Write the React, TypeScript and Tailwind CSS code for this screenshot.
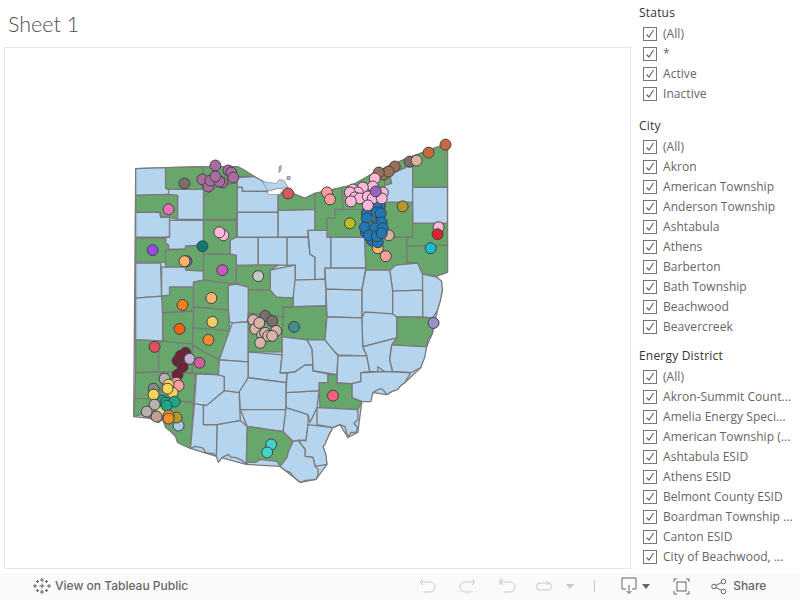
import React from "react";

const BLUE = "#b5d5ef";
const GREEN = "#68a76b";

// state outline, sits under the counties so no white shows between them
const outline =
  "135,168 203,166 237,166 254,176 263,181 278,193 290,192 305,198 315,193 342,187 352,185 373,173 390,165 407,158 428,150 448,143 448,272 437,276 443,290 438,310 433,333 427,347 421,368 405,383 387,395 373,393 362,402 358,433 348,438 340,425 333,428 323,447 327,465 316,480 300,483 280,467 246,465 216,457 190,449 162,420 133,417";

// county shapes in page coordinates, [fill, points]
const counties: [string, string][] = [
  [BLUE, "135,168 165,167 165,188 168,189 168,194 135,195"],
  [GREEN, "165,167 203,166 203,189 168,189 165,188"],
  [GREEN, "203,166 237,166 243,169 254,176 237,176 237,182 215,187 203,197"],
  [GREEN, "203,197 215,187 237,182 237,219 203,219"],
  [BLUE, "168,189 203,189 203,219 177,219 177,195 168,195"],
  [GREEN, "135,195 168,194 177,195 177,219 169,217 160,216 160,212 135,212"],
  [BLUE, "135,212 159,212 160,217 169,217 169,237 135,237"],
  [BLUE, "169,220 203,220 203,245 185,246 185,249 168,249 168,245 165,243 165,237 169,237"],
  [GREEN, "135,238 165,238 165,243 168,245 168,250 165,250 165,262 135,262"],
  [GREEN, "168,250 185,249 185,246 203,245 203,271 185,270 185,267 165,267 165,250"],
  [BLUE, "135,263 160,263 161,296 135,298"],
  [BLUE, "161,267 185,267 185,270 203,271 203,280 193,282 193,287 169,287 169,295 161,296"],
  [GREEN, "169,287 193,287 193,311 162,313 161,296 169,295"],
  [GREEN, "203,220 236,220 236,237 230,240 230,254 203,254"],
  [GREEN, "203,254 230,254 236,255 236,284 203,280"],
  [BLUE, "236,237 258,237 258,265 236,265 236,255 230,254 230,240"],
  [BLUE, "258,237 287,237 287,265 258,265"],
  [BLUE, "237,177 254,176 263,181 272,188 266,191 242,191 242,187 237,187"],
  [BLUE, "237,187 242,187 242,191 266,191 270,193 278,193 278,212 237,212"],
  [BLUE, "237,212 278,212 278,237 237,237"],
  [BLUE, "278,210 315,209 315,230 308,230 308,237 278,237"],
  [BLUE, "287,237 308,237 310,254 315,257 315,280 295,280 295,265 287,265"],
  [BLUE, "308,230 331,230 331,268 325,268 325,279 315,280 315,257 310,254"],
  [BLUE, "331,237 365,237 366,268 331,268"],
  [BLUE, "325,268 366,268 362,290 326,289"],
  [GREEN, "278,193 290,192 305,198 315,193 315,209 278,210"],
  [GREEN, "315,193 330,190 342,187 343,209 335,209 335,218 327,218 327,230 315,230"],
  [GREEN, "343,209 365,209 365,237 327,237 327,218 335,218 335,209"],
  [GREEN, "342,187 352,185 373,173 385,172 385,195 380,195 381,207 365,209 343,209"],
  [GREEN, "373,173 390,165 407,158 406,167 390,174 392,183 385,185 385,172"],
  [BLUE, "390,174 406,167 406,166 413,166 413,202 385,202 385,185 392,183"],
  [GREEN, "407,158 428,150 448,143 448,187 413,187 413,166 406,166"],
  [BLUE, "413,187 448,187 448,223 413,223"],
  [GREEN, "385,202 413,202 413,237 385,237"],
  [GREEN, "365,209 381,207 380,195 385,195 385,237 365,237"],
  [GREEN, "413,223 448,223 448,245 407,246 407,237 413,237"],
  [GREEN, "407,246 448,245 448,272 437,276 423,274 418,263 407,262"],
  [GREEN, "365,237 407,237 407,262 418,263 396,265 390,270 366,270"],
  [BLUE, "396,265 418,263 423,274 423,290 393,291 390,270"],
  [BLUE, "366,270 390,270 393,291 393,315 362,318 362,290"],
  [BLUE, "423,274 437,277 442,281 443,290 442,294 441,300 438,310 435,315 433,318 423,317"],
  [BLUE, "393,291 423,290 423,317 397,317 393,315"],
  [GREEN, "397,317 433,318 433,333 428,340 427,347 392,345 397,338"],
  [BLUE, "362,318 365,312 393,314 397,317 397,338 370,345 363,347"],
  [BLUE, "326,289 362,290 362,318 327,317"],
  [BLUE, "293,280 325,279 326,289 326,306 293,307"],
  [GREEN, "283,307 326,306 327,317 325,340 307,340 282,337"],
  [BLUE, "270,270 295,265 295,280 293,298 276,297 270,290"],
  [GREEN, "236,266 258,265 278,265 270,270 270,290 248,290 248,287 236,284"],
  [GREEN, "248,290 270,290 276,297 293,298 293,307 283,307 283,317 248,313"],
  [BLUE, "228,285 236,284 248,287 248,322 232,323 229,322 228,310"],
  [GREEN, "193,282 203,280 236,284 228,285 228,310 193,307"],
  [GREEN, "193,307 228,310 229,322 229,331 192,328"],
  [GREEN, "192,328 229,331 219,360 203,352 192,345"],
  [BLUE, "229,331 232,323 248,322 248,362 219,360"],
  [GREEN, "162,313 193,311 192,345 162,341"],
  [BLUE, "135,298 161,296 162,313 162,341 135,340"],
  [GREEN, "135,340 158,341 158,372 135,373"],
  [GREEN, "158,341 192,344 192,373 158,372"],
  [GREEN, "192,345 203,352 219,360 218,375 192,373"],
  [GREEN, "160,372 195,374 193,403 160,399"],
  [GREEN, "135,373 160,372 160,399 134,399"],
  [GREEN, "134,399 160,399 162,420 158,423 152,420 146,417 140,415 133,417"],
  [GREEN, "160,399 193,403 190,449 183,446 177,443 175,437 170,432 165,428 162,420"],
  [BLUE, "194,404 203,403 203,425 217,425 216,457 213,454 210,454 205,453 203,449 200,448 194,447 190,449"],
  [BLUE, "196,374 218,375 224,377 224,391 206,406 194,404"],
  [BLUE, "224,391 240,393 239,397 240,421 217,425 203,425 203,405 206,406"],
  [BLUE, "217,425 240,421 247,427 246,465 242,461 235,458 231,458 228,455 222,458 218,463 216,457"],
  [BLUE, "219,360 248,362 248,378 240,393 224,391 224,377 218,375"],
  [BLUE, "248,352 282,355 280,373 287,373 286,383 248,378"],
  [GREEN, "248,313 283,317 282,337 282,352 248,352"],
  [BLUE, "248,378 286,383 286,410 240,410 239,392"],
  [BLUE, "240,410 286,410 283,432 247,427"],
  [GREEN, "247,427 283,432 293,442 288,453 287,458 280,467 277,462 268,461 260,460 255,463 248,463 246,465"],
  [BLUE, "286,408 300,412 308,415 308,425 306,441 298,441 293,442 283,432"],
  [BLUE, "286,393 319,391 317,408 310,423 308,415 286,408"],
  [BLUE, "287,373 295,372 305,365 313,365 313,371 328,374 328,383 320,383 319,391 286,393"],
  [BLUE, "282,337 307,340 312,349 313,365 305,365 295,372 287,373 280,373 282,355"],
  [BLUE, "307,340 325,340 334,351 338,356 337,375 313,371 313,365 312,349"],
  [BLUE, "327,317 362,318 363,347 367,356 338,355 334,351 325,340"],
  [BLUE, "338,356 367,356 370,372 361,373 361,382 352,384 337,383"],
  [BLUE, "363,347 370,345 397,338 392,345 390,360 393,372 385,372 378,367 378,372 370,372 367,356"],
  [BLUE, "392,345 427,347 425,358 421,368 411,373 393,372 390,360"],
  [BLUE, "352,384 361,382 361,373 378,372 393,372 411,373 405,383 401,386 398,390 392,392 387,395 384,391 382,389 378,390 373,393 372,398 371,402 362,402 352,398"],
  [GREEN, "319,383 328,383 328,375 337,375 337,384 352,384 352,398 362,402 358,410 320,408"],
  [BLUE, "317,408 358,410 358,420 354,424 358,428 356,433 351,433 348,438 346,430 345,427 340,425 333,428 317,425"],
  [BLUE, "308,425 333,428 329,435 325,445 323,447 326,455 327,465 315,467 313,458 305,457 305,450 298,441 306,441"],
  [BLUE, "293,442 298,441 305,450 305,457 313,458 315,467 318,470 318,476 316,480 306,481 300,483 294,478 290,473 285,471 280,467 287,458 288,453"],
];

// points on the map, drawn in this order
const points: [number, number, string][] = [
  [184, 183, "#7b6f6c"], [168, 209, "#ee6fb8"], [288, 193, "#e15759"],
  [215, 165, "#a86d9c"], [202, 179, "#a86d9c"], [208, 186, "#a86d9c"], [222, 182, "#a86d9c"],
  [210, 180, "#a86d9c"], [219, 181, "#a86d9c"], [215, 176, "#a86d9c"], [228, 170, "#a86d9c"], [231, 172, "#a86d9c"], [233, 177, "#a86d9c"],
  [223, 235, "#ffb8d8"], [219, 232, "#ffb8d8"], [202, 246, "#0b7a75"], [152, 250, "#9a4be8"],
  [186, 261, "#7a5fb0"], [184, 261, "#ffb56b"], [222, 270, "#c75bc0"], [258, 276, "#c7c7c7"],
  [182, 305, "#f07f1e"], [211, 298, "#fdb56f"],
  [446, 144, "#c96a3e"], [429, 152, "#c96a3e"], [384, 174, "#9a7259"], [395, 166, "#9a7259"], [389, 171, "#9a7259"], [379, 172, "#9a7259"],
  [410, 161, "#7b6f6c"], [417, 160, "#d9b3a0"],
  [327, 192, "#ff9d9a"], [330, 199, "#ff9d9a"], [350, 223, "#bcbd22"], [403, 206, "#b59a2a"],
  [378, 248, "#ffb56b"], [386, 256, "#ff9d9a"], [389, 235, "#d9b3a0"],
  [366, 232, "#1f77b4"], [380, 205, "#1f77b4"], [376, 206, "#1f77b4"], [367, 213, "#1f77b4"], [377, 212, "#1f77b4"], [381, 213, "#1f77b4"], [367, 218, "#1f77b4"],
  [378, 223, "#1f77b4"], [382, 222, "#1f77b4"], [365, 227, "#1f77b4"], [375, 228, "#1f77b4"], [383, 228, "#1f77b4"], [372, 240, "#1f77b4"], [378, 242, "#1f77b4"], [369, 235, "#1f77b4"], [377, 236, "#1f77b4"], [382, 233, "#1f77b4"],
  [375, 178, "#ffb8d8"], [373, 186, "#ffb8d8"], [363, 187, "#ffb8d8"], [353, 189, "#ffb8d8"], [358, 192, "#ffb8d8"], [350, 192, "#ffb8d8"], [355, 197, "#ffb8d8"], [360, 198, "#ffb8d8"], [351, 201, "#ffb8d8"],
  [368, 196, "#ffb8d8"], [383, 192, "#ffb8d8"], [373, 198, "#ffb8d8"], [382, 198, "#ffb8d8"], [368, 205, "#ffb8d8"], [376, 191, "#9467bd"],
  [439, 227, "#ffb8d8"], [438, 234, "#d62728"], [431, 248, "#17becf"],
  [265, 316, "#7b6f6c"], [272, 321, "#7b6f6c"], [253, 320, "#d7b5a6"], [255, 329, "#d7b5a6"], [259, 323, "#d7b5a6"], [276, 331, "#d7b5a6"], [262, 335, "#d7b5a6"], [265, 333, "#d7b5a6"], [268, 336, "#d7b5a6"], [272, 336, "#d7b5a6"], [260, 343, "#d7b5a6"],
  [294, 327, "#3f8f8c"], [179, 329, "#f2640f"], [212, 322, "#f6cf62"], [208, 340, "#f28e2b"], [154, 347, "#e0505f"],
  [185, 353, "#6f2138"], [177, 361, "#6f2138"], [180, 356, "#6f2138"], [183, 362, "#6f2138"], [182, 367, "#6f2138"], [177, 375, "#6f2138"],
  [189, 359, "#c5b0d5"], [199, 363, "#d0609b"], [164, 379, "#bab0ac"], [176, 383, "#ff9d9a"], [178, 386, "#ff9d9a"],
  [168, 385, "#f6d55c"], [172, 393, "#f6d55c"], [167, 389, "#f6d55c"], [153, 389, "#888888"], [153, 395, "#f6d55c"],
  [160, 412, "#e6dc8a"], [162, 401, "#1aa784"], [165, 403, "#1aa784"], [174, 402, "#1aa784"], [154, 405, "#bab0ac"], [166, 406, "#1aa784"],
  [146, 412, "#bab0ac"], [156, 417, "#c49c94"], [178, 426, "#aec7e8"], [176, 418, "#b59a2a"], [168, 416, "#f28e2b"], [168, 419, "#f28e2b"],
  [271, 445, "#40d3c8"], [267, 453, "#40d3c8"], [333, 396, "#f2607f"], [434, 323, "#9c8ec9"],
];

const statusItems = ["(All)", "*", "Active", "Inactive"];
const cityItems = ["(All)", "Akron", "American Township", "Anderson Township", "Ashtabula", "Athens", "Barberton", "Bath Township", "Beachwood", "Beavercreek"];
const districtItems = [
  "(All)",
  "Akron-Summit Count...",
  "Amelia Energy Speci...",
  "American Township (...",
  "Ashtabula ESID",
  "Athens ESID",
  "Belmont County ESID",
  "Boardman Township ...",
  "Canton ESID",
  "City of Beachwood, ...",
];

function OhioMap() {
  return (
    <svg viewBox="4 47 627 522" className="h-full w-full">
      <g stroke="#7a7a7a" strokeWidth="1.3" strokeLinejoin="round">
        <polygon points={outline} fill={BLUE} />
        {counties.map(([fill, pts], i) => (
          <polygon key={i} points={pts} fill={fill} />
        ))}
        <polygon points="262,181 276,183 279,179 284,180 288,187 278,188 268,191" fill={BLUE} strokeWidth="0.6" />
        <polygon points="267,191 278,188 284,189 279,194 268,194" fill="#ffffff" strokeWidth="0.6" />
        <polygon points="279,166 281,165 281,169 279,172" fill={BLUE} strokeWidth="0.8" />
        <polygon points="287,176 290,176 290,179 287,179" fill={BLUE} strokeWidth="0.8" />
      </g>
      <g stroke="#3f3f46" strokeWidth="1">
        {points.map(([cx, cy, fill], i) => (
          <circle key={i} cx={cx} cy={cy} r="5.5" fill={fill} />
        ))}
      </g>
    </svg>
  );
}

function FilterRow({ label }: { label: string }) {
  return (
    <div className="flex h-5 items-center pl-1">
      <span className="flex h-[14px] w-[14px] shrink-0 items-center justify-center border border-[#767676] bg-white">
        <svg width="10" height="10" viewBox="0 0 10 10" fill="none" stroke="#6b6b6b" strokeWidth="1.2">
          <path d="M1.5 5.5 L4 8 L8.5 1" />
        </svg>
      </span>
      <span className="ml-[6px] whitespace-nowrap text-[12px] tracking-[0.05px] text-[#666666]">{label}</span>
    </div>
  );
}

function FilterGroup({ title, items, className }: { title: string; items: string[]; className: string }) {
  return (
    <div className={className}>
      <div className="h-[21px] text-[12px] leading-5 tracking-[0.2px] text-[#333333]">{title}</div>
      {items.map((item, i) => (
        <FilterRow key={i} label={item} />
      ))}
    </div>
  );
}

function Footer() {
  const off = "#c9c9c9";
  const on = "#666666";
  return (
    <div className="flex h-[27px] shrink-0 items-center bg-[#fafafa] pb-[1px] pl-[33px] font-['Inter',sans-serif]">
      <svg width="18" height="18" viewBox="0 0 18 18" fill="none" stroke="#5f6368" strokeWidth="1">
        <path d="M9 1v4M7 3h4M9 13v4M7 15h4M2 7v4M0 9h4M16 7v4M14 9h4M4.5 3v3M3 4.5h3M13.5 3v3M12 4.5h3M4.5 12v3M3 13.5h3M13.5 12v3M12 13.5h3M9 6.5v5M6.5 9h5" />
      </svg>
      <span className="ml-[4px] text-[12px] font-medium text-[#666666]">View on Tableau Public</span>

      <svg className="ml-[231px]" width="17" height="17" viewBox="0 0 17 17" fill="none" stroke={off} strokeWidth="1">
        <path d="M1 4h10a5 5 0 0 1 0 10H5M4 1 1 4l3 3" />
      </svg>
      <svg className="ml-[23px]" width="17" height="17" viewBox="0 0 17 17" fill="none" stroke={off} strokeWidth="1">
        <path d="M16 4H6a5 5 0 0 0 0 10h6M13 1l3 3-3 3" />
      </svg>
      <svg className="ml-[23px]" width="17" height="17" viewBox="0 0 17 17" fill="none" stroke={off} strokeWidth="1">
        <path d="M1 1v6M1 4h10a5 5 0 0 1 0 10H5M4 1 1 4l3 3" />
      </svg>
      <svg className="ml-[19px]" width="17" height="17" viewBox="0 0 17 17" fill="none" stroke={off} strokeWidth="1">
        <path d="M13 5H5a3.5 3.5 0 0 0 0 7h8a3.5 3.5 0 0 0 0-7M12 3l2 2-2 2" />
      </svg>
      <span className="ml-[14px] h-0 w-0 border-x-[4px] border-t-[5px] border-x-transparent border-t-[#c9c9c9]" />
      <span className="ml-[20px] h-[12px] w-px bg-[#c9c9c9]" />
      <svg className="ml-[26px]" width="16" height="18" viewBox="0 0 16 18" fill="none" stroke={on} strokeWidth="1">
        <path d="M5 12H1V1h14v11h-4M8 8v8M5.5 14 8 16.5 10.5 14" />
      </svg>
      <span className="ml-[5px] h-0 w-0 border-x-[4px] border-t-[5px] border-x-transparent border-t-[#666666]" />
      <svg className="ml-[23px]" width="17" height="17" viewBox="0 0 17 17" fill="none" stroke={on} strokeWidth="1">
        <path d="M1 4V1h3M13 1h3v3M16 13v3h-3M4 16H1v-3" />
        <rect x="4" y="4" width="9" height="9" />
      </svg>
      <svg className="ml-[21px]" width="16" height="17" viewBox="0 0 16 17" fill="none" stroke={on} strokeWidth="1">
        <circle cx="3" cy="8.5" r="2.3" />
        <circle cx="12.5" cy="3.5" r="2.3" />
        <circle cx="12.5" cy="13.5" r="2.3" />
        <path d="M5 7.4 10.5 4.6M5 9.6l5.5 2.8" />
      </svg>
      <span className="ml-[6px] text-[12px] font-medium text-[#666666]">Share</span>
    </div>
  );
}

export default function App() {
  return (
    <div className="flex h-[600px] w-[800px] flex-col overflow-hidden bg-white font-['Open_Sans',sans-serif]">
      <div className="flex min-h-0 flex-1">
        <div className="flex w-[639px] shrink-0 flex-col pl-[4px] pr-[8px] pb-[4px]">
          <div className="h-[47px] shrink-0 pl-[4px] pt-[10px] font-['Lato',sans-serif] text-[21.5px] leading-7 font-light text-[#4f4f4f]">Sheet 1</div>
          <div className="min-h-0 flex-1 border border-[#e6e6e6]">
            <OhioMap />
          </div>
        </div>
        <div className="min-w-0 flex-1 pt-[3px]">
          <FilterGroup title="Status" items={statusItems} className="" />
          <FilterGroup title="City" items={cityItems} className="mt-[12px]" />
          <FilterGroup title="Energy District" items={districtItems} className="mt-[9px]" />
        </div>
      </div>
      <Footer />
    </div>
  );
}
